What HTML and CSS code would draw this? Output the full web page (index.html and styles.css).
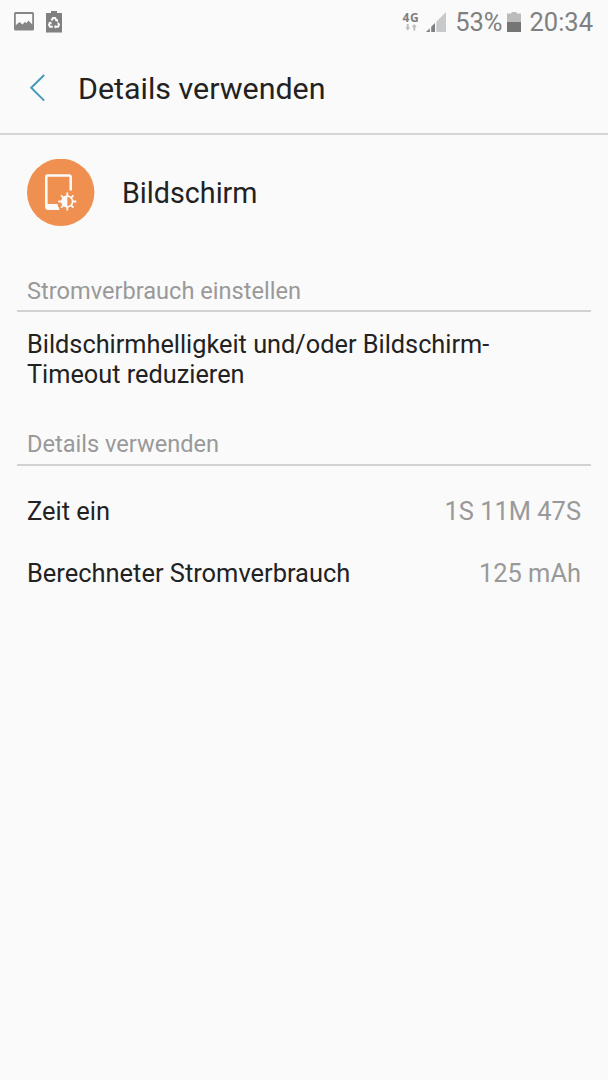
FILE: index.html
```html
<!DOCTYPE html>
<html lang="de">
<head>
    <meta charset="UTF-8">
    <meta name="viewport" content="width=device-width, initial-scale=1.0">
    <title>Details verwenden</title>
    <link rel="stylesheet" href="styles.css">
</head>
<body>
    <div class="status-bar">
        <svg class="picture-icon" width="20" height="19" viewBox="0 0 20 19">
            <path fill="#858585" fill-rule="evenodd" d="M1.500 0h17a1.500 1.500 0 0 1 1.500 1.500v15.500a1.500 1.500 0 0 1-1.500 1.500h-17a1.500 1.500 0 0 1-1.500-1.500v-15.500a1.500 1.500 0 0 1 1.500-1.500zM1.800 2v11.200l3.700-3.200 3 2.500 2.200-2.500 1.800 1 2-2.500 3.700 4v-10.500z"/>
        </svg>
        <svg class="recycle-icon" width="16" height="22" viewBox="0 0 16 22">
            <path fill="#808080" d="M5 0h6v2h5v19.500H0V2h5z"/>
            <g fill="none" stroke="#fafafa" stroke-width="2">
                <path d="M5.400 9.500l1.500-2.400h2.200l1.400 2.400"/>
                <path d="M12 11.800l1 2-1 1.900H9.500"/>
                <path d="M6.800 15.700H4l-1-1.900 1-2"/>
            </g>
            <g fill="#fafafa">
                <path d="M12 8v3l-3-1z"/>
                <path d="M9.800 13.700v4L7.800 15.700z"/>
                <path d="M2.200 11.200l3-.5.700 2.700z"/>
            </g>
        </svg>
        <div class="network">
            <span>4G</span>
            <svg width="12" height="7" viewBox="0 0 12 7">
                <path fill="#bdbdbd" d="M1.700 0h2v3.500h1.500L2.700 6.500.2 3.500h1.500zM8.300 6.500h2V3h1.500L9.300 0 6.800 3h1.500z"/>
            </svg>
        </div>
        <svg class="signal-icon" width="20" height="20" viewBox="0 0 20 20">
            <path fill="#808080" d="M0 20l3.800-3.800V20zM5.200 20v-5.200l3.800-3.800V20z"/>
            <path fill="#c8c9ca" d="M10.300 20V9.700L20 0v20z"/>
        </svg>
        <span class="percent">53%</span>
        <svg class="battery-icon" width="14" height="20" viewBox="0 0 14 20">
            <path fill="#bbb" d="M4.500 0h5v1.500H14V11H0V1.500h4.500z"/>
            <path fill="#757575" d="M0 10h14v10H0z"/>
        </svg>
        <span class="clock">20:34</span>
    </div>

    <div class="header">
        <svg class="back" width="16" height="28" viewBox="0 0 16 28">
            <path d="M15.200 1L2.200 13.800l13 12.800" fill="none" stroke="#439bb9" stroke-width="2"/>
        </svg>
        <h1>Details verwenden</h1>
    </div>

    <div class="app">
        <svg class="app-icon" width="68" height="68" viewBox="0 0.500 68 68">
            <circle cx="33.700" cy="33.900" r="33.700" fill="#f09050"/>
            <path d="M43.700 32V18.500a1.500 1.500 0 0 0-1.500-1.500h-21.400a1.500 1.500 0 0 0-1.500 1.500v30a1.500 1.500 0 0 0 1.500 1.500H32" fill="none" stroke="#fafafa" stroke-width="2.600"/>
            <path d="M19 45.500h11.500c.2 2.300 1 4.200 2.300 5.700H21a2 2 0 0 1-2-2z" fill="#fafafa"/>
            <g transform="translate(40.300 43)" fill="#fafafa">
                <path d="M0-5.500a5.500 5.500 0 0 0 0 11z"/>
                <circle r="5.300" fill="none" stroke="#fafafa" stroke-width="1.700"/>
                <path d="M0-9V-5M0 9V5M-9 0h4M9 0H5M-6.200-6.200l2.500 2.500M6.200 6.200L3.700 3.700M-6.200 6.200l2.500-2.500M6.200-6.200L3.700-3.700" stroke="#fafafa" stroke-width="1.800"/>
            </g>
        </svg>
        <span class="app-name">Bildschirm</span>
    </div>

    <div class="section power">
        <h2>Stromverbrauch einstellen</h2>
        <p class="hint">Bildschirmhelligkeit und/oder Bildschirm-Timeout reduzieren</p>
    </div>

    <div class="section">
        <h2>Details verwenden</h2>
        <div class="rows">
            <div class="row">
                <span>Zeit ein</span>
                <span class="value">1S 11M 47S</span>
            </div>
            <div class="row">
                <span>Berechneter Stromverbrauch</span>
                <span class="value">125 mAh</span>
            </div>
        </div>
    </div>
</body>
</html>
```
FILE: styles.css
```css
* {
    box-sizing: border-box;
}
body {
    margin: 0;
    min-height: 100vh;
    background: #fafafa;
    color: #222;
    font-family: Roboto, sans-serif;
}
svg {
    display: block;
    flex-shrink: 0;
}
h1, h2, p {
    margin: 0;
    font-weight: 400;
}
.status-bar {
    display: flex;
    align-items: center;
    height: 43px;
    padding: 0 15px 0 14px;
    color: #808080;
    font-size: 25.500px;
    line-height: 44px;
    white-space: nowrap;
}
.recycle-icon {
    margin-left: 12px;
}
.network {
    display: flex;
    flex-direction: column;
    align-items: center;
    margin-left: auto;
    padding-bottom: 1px;
    font-family: "Noto Sans", sans-serif;
    font-size: 12px;
    font-weight: 700;
    letter-spacing: 0.500px;
    line-height: 13px;
}
.signal-icon {
    margin-left: 7px;
}
.percent {
    margin-left: 9px;
}
.battery-icon {
    margin: 0 8px 0 5px;
}
.header {
    display: flex;
    align-items: center;
    height: 92px;
    padding-left: 29px;
    border-bottom: 2px solid #d5d5d5;
}
.header h1 {
    margin-left: 33px;
    padding-top: 2px;
    font-size: 30.400px;
    line-height: 40px;
}
.app {
    display: flex;
    align-items: center;
    height: 135px;
    padding: 0 27px 20px;
}
.app-name {
    margin-left: 27px;
    font-size: 28.700px;
    line-height: 36px;
}
.section {
    margin: 0 17px;
}
.section h2 {
    padding: 0 10px;
    border-bottom: 2px solid #d2d2d2;
    color: #999;
    font-size: 23.600px;
    line-height: 40px;
}
.power h2 {
    padding-top: 2px;
    line-height: 38px;
}
.hint {
    height: 112px;
    padding: 18px 10px 0;
    font-size: 25.300px;
    line-height: 30px;
}
.rows {
    padding: 15px 10px 0;
}
.row {
    display: flex;
    justify-content: space-between;
    font-size: 25.450px;
    line-height: 61.500px;
}
.value {
    color: #999;
}
```
